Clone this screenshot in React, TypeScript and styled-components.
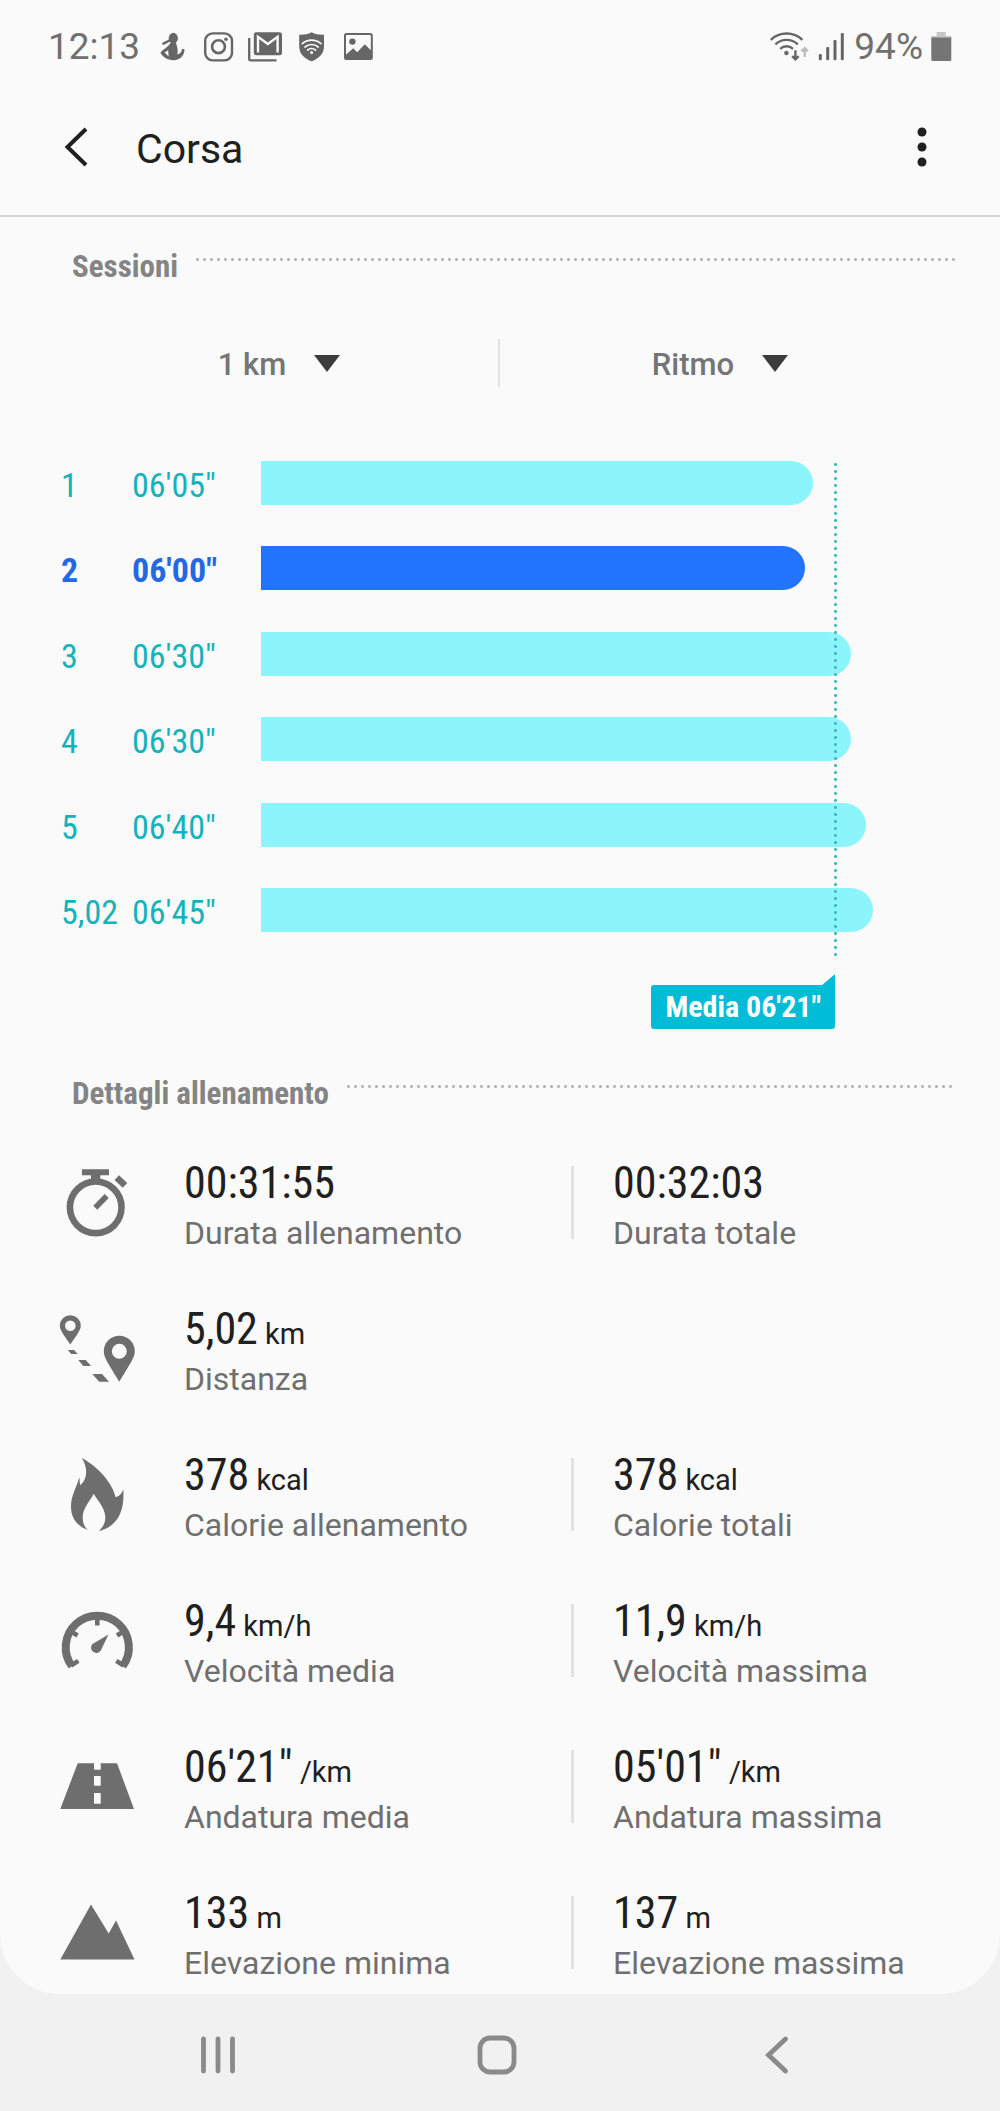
import React from "react";
import styled, { createGlobalStyle } from "styled-components";

const regular = `Roboto, "Noto Sans", sans-serif`;
const condensed = `"Roboto Condensed", Roboto, "Noto Sans", sans-serif`;

const color = {
  page: "#fafafa",
  nav: "#f1f1f1",
  ink: "#202020",
  label: "#6f6f6f",
  icon: "#6e6e6e",
  status: "#666666",
  statusText: "#707070",
  heading: "#848484",
  rule: "#d6d6d6",
  divider: "#e2e2e2",
  dot: "#b4b4b4",
  bar: "#8cf5fb",
  barText: "#14b3bb",
  best: "#2274ff",
  bestText: "#2469e4",
  average: "#00bcd6",
  averageDot: "#39b9c4",
  navIcon: "#8a8a8a",
};

const GlobalStyle = createGlobalStyle`
  *, *::before, *::after { box-sizing: border-box; }
  body { margin: 0; background: ${color.nav}; font-family: ${regular}; color: ${color.ink}; }
  button, select { font: inherit; color: inherit; border: 0; background: none; margin: 0; padding: 0; }
  button { cursor: pointer; }
  h1, h2, dl, dd, dt, ol { margin: 0; padding: 0; }
  svg { display: block; flex: none; }
`;

const Screen = styled.div`
  display: flex;
  flex-direction: column;
  min-height: 100vh;
`;

const Sheet = styled.div`
  background: ${color.page};
  border-radius: 0 0 60px 60px;
  padding-bottom: 3px;
`;

const StatusBar = styled.div`
  display: flex;
  align-items: center;
  justify-content: space-between;
  height: 93px;
  padding: 0 48px;
  color: ${color.statusText};
  font-size: 37px;
  line-height: 44px;
`;

const StatusGroup = styled.div<{ $gap: number }>`
  display: flex;
  align-items: center;
  gap: ${(p) => p.$gap}px;
`;

const Clock = styled.time`
  width: 97px;
`;

const AppBar = styled.header`
  display: flex;
  align-items: center;
  padding: 22px 46px 36px 44px;
  border-bottom: 2px solid ${color.rule};
`;

const IconButton = styled.button`
  display: grid;
  place-items: center;
  width: 64px;
  height: 64px;
`;

const Title = styled.h1`
  flex: 1;
  margin-left: 28px;
  padding-top: 4px;
  font-size: 41px;
  font-weight: 400;
  line-height: 60px;
`;

const SectionHeader = styled.div`
  display: flex;
  align-items: flex-start;
  gap: 16px;
  padding: 0 44px 0 72px;
`;

const SectionTitle = styled.h2`
  font-family: ${condensed};
  font-size: 31px;
  font-weight: 700;
  line-height: 40px;
  color: ${color.heading};
`;

const DottedRule = styled.div`
  flex: 1;
  height: 3px;
  margin-top: 11px;
  background: radial-gradient(circle at center, ${color.dot} 1px, transparent 2px) 0 0 / 7px 3px repeat-x;
`;

const Sessions = styled.section`
  padding: 30px 0 45px;
`;

const Filters = styled.div`
  display: grid;
  grid-template-columns: 1fr 1fr;
  margin: 52px 60px 74px;
`;

const Filter = styled.label`
  display: flex;
  align-items: center;
  justify-content: center;
  gap: 28px;
  height: 48px;
  color: #757575;

  &:first-child {
    border-right: 2px solid ${color.divider};
  }
`;

const FilterSelect = styled.select`
  appearance: none;
  field-sizing: content;
  padding-top: 4px;
  font-size: 31px;
  font-weight: 500;
  line-height: 40px;
`;

const Chart = styled.div`
  position: relative;
  margin: 0 60px 0 61px;
`;

const Laps = styled.ol`
  display: flex;
  flex-direction: column;
  justify-content: space-between;
  height: 471px;
  list-style: none;
`;

const Lap = styled.li<{ $best: boolean }>`
  display: grid;
  grid-template-columns: 71px 129px 1fr;
  height: 44px;
  font-family: ${condensed};
  font-size: 34px;
  font-weight: ${(p) => (p.$best ? 700 : 400)};
  line-height: 48px;
  color: ${(p) => (p.$best ? color.bestText : color.barText)};
  white-space: nowrap;
`;

const LapBar = styled.div<{ $best: boolean }>`
  height: 44px;
  border-radius: 0 22px 22px 0;
  background: ${(p) => (p.$best ? color.best : color.bar)};
`;

const Plot = styled.div`
  position: absolute;
  inset: 0 0 70px 200px;
`;

const AverageLine = styled.div`
  height: 100%;
  background: radial-gradient(circle at center, ${color.averageDot} 1px, transparent 2px) right top / 3px 7px repeat-y;
`;

const AverageTrack = styled.div`
  margin: 53px 0 0 200px;
`;

const AverageSlot = styled.div`
  display: flex;
  justify-content: flex-end;
  padding-right: 2px;
`;

const AverageTag = styled.div`
  position: relative;
  padding: 0 14px;
  border-radius: 3px;
  background: ${color.average};
  color: #ffffff;
  font-family: ${condensed};
  font-size: 30px;
  font-weight: 700;
  line-height: 44px;
  white-space: nowrap;

  &::before {
    content: "";
    position: absolute;
    right: 0;
    bottom: 100%;
    margin-bottom: -4px;
    width: 13px;
    height: 15px;
    background: ${color.average};
    clip-path: polygon(100% 0, 100% 100%, 0 100%, 0 73%);
  }
`;

const Details = styled.section`
  display: flex;
  flex-direction: column;
`;

const DetailList = styled.div`
  display: flex;
  flex-direction: column;
  gap: 46px;
  padding: 47px 42px 0 58px;
`;

const DetailRow = styled.div`
  display: grid;
  grid-template-columns: 126px 1fr 1fr;
  height: 100px;
`;

const Metric = styled.dl<{ $divided: boolean }>`
  display: flex;
  flex-direction: column-reverse;
  justify-content: flex-end;
  padding-left: ${(p) => (p.$divided ? 42 : 0)}px;
  background: ${(p) =>
    p.$divided ? `linear-gradient(${color.divider}, ${color.divider}) 0 5px / 3px 73px no-repeat` : "none"};
  white-space: nowrap;
`;

const MetricValue = styled.dd`
  font-family: ${condensed};
  font-size: 44px;
  line-height: 44px;
`;

const MetricUnit = styled.span`
  font-family: ${regular};
  font-size: 29px;
  line-height: 29px;
`;

const MetricLabel = styled.dt`
  font-size: 32px;
  line-height: 56px;
  color: ${color.label};
`;

const NavBar = styled.nav`
  display: grid;
  grid-template-columns: repeat(3, 1fr);
  justify-items: center;
  align-items: center;
  height: 117px;
  padding: 4px 83px 0 78px;
`;

/* ---------- icons ---------- */

const StatusIcon = ({ children, width = 36 }: { children: React.ReactNode; width?: number }) => (
  <svg width={width} height="30" viewBox={`0 0 ${width} 30`} fill={color.status} aria-hidden="true">
    {children}
  </svg>
);

const FitnessIcon = () => (
  <StatusIcon>
    <ellipse cx="18.3" cy="6.2" rx="4.6" ry="5.4" />
    <path d="M15 8.2 8.4 11.6" stroke={color.status} strokeWidth="2.4" strokeLinecap="round" />
    <path
      fillRule="evenodd"
      d="M16 10h4.6l1.2 3.4c.6 3 1.6 6 .4 9.2 3-.8 4.6-2.8 4.8-5.6h2.4c.4 6-3.8 11.2-11 11.2-6 0-10.6-3-13-7.4 1.8-3.2 6-4.2 9.4-8.8ZM9.6 20.4l4 4.2-.4-6.4Z"
    />
  </StatusIcon>
);

const InstagramIcon = () => (
  <StatusIcon>
    <rect x="4.2" y="1.4" width="26.8" height="27" rx="7.5" fill="none" stroke={color.status} strokeWidth="2.4" />
    <circle cx="17.5" cy="14.7" r="6.4" fill="none" stroke={color.status} strokeWidth="2.6" />
    <circle cx="25" cy="7.2" r="1.8" />
  </StatusIcon>
);

const MailIcon = () => (
  <StatusIcon>
    <path d="M2.2 6V27.3a1 1 0 0 0 1 1H29.5" fill="none" stroke={color.status} strokeWidth="2.3" />
    <rect x="6.8" y=".3" width="28.2" height="23" rx="2.5" />
    <path d="M11 20.5V4.8L20.8 12l9.8-7.2v15.7" fill="none" stroke={color.page} strokeWidth="2.4" />
  </StatusIcon>
);

const ShieldIcon = () => (
  <StatusIcon>
    <path d="M18.6.3c3.6 2.2 8 2.5 12.4 2.4V14c0 8-5 12.6-12.4 15.2C11.2 26.6 6.2 22 6.2 14V2.7C10.6 2.8 15 2.5 18.6.3Z" />
    <g fill="none" stroke={color.page} strokeWidth="1.7" strokeLinecap="round">
      <path d="M9.3 11.7a14 14 0 0 1 18.6 0" />
      <path d="M12 15a10 10 0 0 1 13.2 0" />
      <path d="M14.7 18a6 6 0 0 1 7.8 0" />
    </g>
    <circle cx="18.6" cy="20.6" r="1.5" fill={color.page} />
  </StatusIcon>
);

const PictureIcon = () => (
  <StatusIcon>
    <rect x="6" y="1.9" width="26.8" height="25" rx="1.5" fill="none" stroke={color.status} strokeWidth="2" />
    <circle cx="13.4" cy="9.6" r="3.2" />
    <path d="M6 23.5l8.2-7.3 4 4 7.6-8 7 7V27.5H6Z" />
  </StatusIcon>
);

const WifiIcon = () => (
  <StatusIcon width={40}>
    <g fill="none" stroke={color.status} strokeWidth="2.4">
      <path d="M.8 7.800a23 23 0 0 1 31.6 0" />
      <path d="M5.4 12.3a16.5 16.5 0 0 1 22.4 0" />
      <path d="M10.2 16.8a9.5 9.5 0 0 1 12.8 0" />
      <path d="M25.4 18.2v9M22.2 24.2l3.2 3.2 3.2-3.2" />
      <path d="M34.7 25v-8.5M31.5 19.4l3.2-3.2 3.2 3.2" stroke="#bdbdbd" />
    </g>
    <circle cx="16.4" cy="21" r="2.2" />
  </StatusIcon>
);

const SignalIcon = () => (
  <StatusIcon width={28}>
    <rect x=".8" y="22" width="3" height="6.300" rx="1.2" />
    <rect x="8.2" y="15" width="3" height="13.3" rx="1.2" />
    <rect x="15.5" y="8" width="3" height="20.3" rx="1.2" />
    <rect x="22.8" y="1" width="3" height="27.3" rx="1.2" />
  </StatusIcon>
);

const BatteryIcon = () => (
  <StatusIcon width={21}>
    <path d="M5.7 0h9v4h5.6v3H.3V4h5.4Z" fill="#c6c6c6" />
    <path d="M.3 5.500h20V27.5a1.500 1.500 0 0 1-1.500 1.500h-17A1.500 1.500 0 0 1 .3 27.5Z" fill="#757575" />
  </StatusIcon>
);

const BackIcon = () => (
  <svg width="24" height="40" viewBox="0 0 24 40" fill="none" stroke={color.ink} strokeWidth="4" aria-hidden="true">
    <path d="M22 2 3.500 20 22 38" />
  </svg>
);

const MoreIcon = () => (
  <svg width="10" height="40" viewBox="0 0 10 40" fill={color.ink} aria-hidden="true">
    <circle cx="5" cy="5" r="4.5" />
    <circle cx="5" cy="20" r="4.5" />
    <circle cx="5" cy="35" r="4.5" />
  </svg>
);

const ArrowDown = () => (
  <svg width="26" height="17" viewBox="0 0 26 17" fill="#3c3c3c" aria-hidden="true">
    <path d="M0 0h26L13 17Z" />
  </svg>
);

const DetailIcon = ({ children }: { children: React.ReactNode }) => (
  <svg width="80" height="80" viewBox="0 0 80 80" fill={color.icon} aria-hidden="true">
    {children}
  </svg>
);

const StopwatchIcon = () => (
  <DetailIcon>
    <circle cx="37.7" cy="46.3" r="25.8" fill="none" stroke={color.icon} strokeWidth="6.6" />
    <path d="M24 8.3h27v6h-8.7V21H33v-6.7h-9Z" />
    <path d="M58.8 16.7 67 24.3" stroke={color.icon} strokeWidth="6.6" />
    <path d="M37.3 46.7 48.7 35" stroke={color.icon} strokeWidth="5.6" />
  </DetailIcon>
);

const DistanceIcon = () => (
  <DetailIcon>
    <path
      fillRule="evenodd"
      d="M12.3 8.2a10.500 10.500 0 0 1 10.500 10.500c0 4-3 8-10.500 18.800C4.800 26.700 1.800 22.700 1.800 18.700A10.500 10.500 0 0 1 12.300 8.200Zm0 5.200a5.300 5.300 0 1 0 0 10.600 5.300 5.300 0 0 0 0-10.600Z"
    />
    <path
      fillRule="evenodd"
      d="M61.3 28.8a15.500 15.500 0 0 1 15.500 15.500c0 6-4 11.500-15.500 30.500-11.500-19-15.500-24.500-15.500-30.500a15.500 15.500 0 0 1 15.500-15.500Zm0 8a7.500 7.500 0 1 0 0 15 7.500 7.500 0 0 0 0-15Z"
    />
    <path d="M9.7 43H16l3.700 4h-6.400ZM20.300 53h7.400l5.300 6h-7.700ZM34.300 67H44l7 7.700h-9.700Z" />
  </DetailIcon>
);

const FlameIcon = () => (
  <DetailIcon>
    <path d="M23.7 5C36 11.5 53 26 57.7 44.3 61 43.5 64 40.5 65.3 36.3 66.5 54 62.5 73 40.7 78 46 73.5 47.5 68.5 47.3 63.7 46.5 54 40.5 49 35.7 40.7 31.5 49 24.5 55 24.7 65.3 25 70.5 26.5 74 30 77 19 73 13 65 13 53.7 13 42.5 18.5 35 21.3 24.3c.6 3 .2 5 .9 7.900C28.5 27.5 31 16 23.7 5Z" />
  </DetailIcon>
);

const SpeedIcon = () => (
  <DetailIcon>
    <g fill="none" stroke={color.icon}>
      <path d="M14 67.2a31.600 31.600 0 1 1 50.600 0" strokeWidth="8" />
      <path d="M39.3 14v12.5M14 33l5.600 3.500M64.600 33 59 36.500M13 66.700l7.300-4.800M65.600 66.700l-7.300-4.800" strokeWidth="4.6" />
    </g>
    <path d="M50.5 35.5 42.8 51.5A5.300 5.300 0 1 1 34.500 45Z" />
  </DetailIcon>
);

const RoadIcon = () => (
  <DetailIcon>
    <path
      fillRule="evenodd"
      d="M19.7 18.2H36V24.7h6.700V18.2H59L76 64H2.3ZM36 31.1v9.700h6.700v-9.700ZM36 47.9v10.800h6.700V47.9Z"
    />
  </DetailIcon>
);

const MountainIcon = () => (
  <DetailIcon>
    <path d="M33 13.5 50.7 42.5 58 29.5 76.5 68.5H2.3Z" />
  </DetailIcon>
);

const NavIcon = ({ children }: { children: React.ReactNode }) => (
  <svg
    width="40"
    height="40"
    viewBox="0 0 40 40"
    fill="none"
    stroke={color.navIcon}
    strokeWidth="4.8"
    strokeLinecap="round"
    aria-hidden="true"
  >
    {children}
  </svg>
);

/* ---------- data ---------- */

const PACE_SCALE = 449;
const AVERAGE_SECONDS = 381;

const laps = [
  { km: "1", pace: `06'05"`, seconds: 365 },
  { km: "2", pace: `06'00"`, seconds: 360, best: true },
  { km: "3", pace: `06'30"`, seconds: 390 },
  { km: "4", pace: `06'30"`, seconds: 390 },
  { km: "5", pace: `06'40"`, seconds: 400 },
  { km: "5,02", pace: `06'45"`, seconds: 405 },
];

type MetricData = { value: string; unit?: string; label: string };

const details: { icon: React.ComponentType; metrics: MetricData[] }[] = [
  {
    icon: StopwatchIcon,
    metrics: [
      { value: "00:31:55", label: "Durata allenamento" },
      { value: "00:32:03", label: "Durata totale" },
    ],
  },
  { icon: DistanceIcon, metrics: [{ value: "5,02", unit: "km", label: "Distanza" }] },
  {
    icon: FlameIcon,
    metrics: [
      { value: "378", unit: "kcal", label: "Calorie allenamento" },
      { value: "378", unit: "kcal", label: "Calorie totali" },
    ],
  },
  {
    icon: SpeedIcon,
    metrics: [
      { value: "9,4", unit: "km/h", label: "Velocità media" },
      { value: "11,9", unit: "km/h", label: "Velocità massima" },
    ],
  },
  {
    icon: RoadIcon,
    metrics: [
      { value: `06'21"`, unit: "/km", label: "Andatura media" },
      { value: `05'01"`, unit: "/km", label: "Andatura massima" },
    ],
  },
  {
    icon: MountainIcon,
    metrics: [
      { value: "133", unit: "m", label: "Elevazione minima" },
      { value: "137", unit: "m", label: "Elevazione massima" },
    ],
  },
];

const share = (seconds: number) => ({ width: `${(seconds / PACE_SCALE) * 100}%` });

export default function App() {
  return (
    <Screen>
      <GlobalStyle />
      <Sheet>
        <StatusBar>
          <StatusGroup $gap={10}>
            <Clock>12:13</Clock>
            <FitnessIcon />
            <InstagramIcon />
            <MailIcon />
            <ShieldIcon />
            <PictureIcon />
          </StatusGroup>
          <StatusGroup $gap={8}>
            <WifiIcon />
            <SignalIcon />
            <span>94%</span>
            <BatteryIcon />
          </StatusGroup>
        </StatusBar>

        <AppBar>
          <IconButton aria-label="Indietro">
            <BackIcon />
          </IconButton>
          <Title>Corsa</Title>
          <IconButton aria-label="Altro">
            <MoreIcon />
          </IconButton>
        </AppBar>

        <Sessions>
          <SectionHeader>
            <SectionTitle>Sessioni</SectionTitle>
            <DottedRule />
          </SectionHeader>

          <Filters>
            <Filter>
              <FilterSelect aria-label="Distanza">
                <option>1 km</option>
              </FilterSelect>
              <ArrowDown />
            </Filter>
            <Filter>
              <FilterSelect aria-label="Valore">
                <option>Ritmo</option>
              </FilterSelect>
              <ArrowDown />
            </Filter>
          </Filters>

          <Chart>
            <Laps>
              {laps.map((lap) => (
                <Lap key={lap.km} $best={!!lap.best}>
                  <span>{lap.km}</span>
                  <span>{lap.pace}</span>
                  <div>
                    <LapBar $best={!!lap.best} style={share(lap.seconds)} />
                  </div>
                </Lap>
              ))}
            </Laps>
            <Plot>
              <AverageLine style={share(AVERAGE_SECONDS)} />
            </Plot>
            <AverageTrack>
              <AverageSlot style={share(AVERAGE_SECONDS)}>
                <AverageTag>Media 06'21"</AverageTag>
              </AverageSlot>
            </AverageTrack>
          </Chart>
        </Sessions>

        <Details>
          <SectionHeader>
            <SectionTitle>Dettagli allenamento</SectionTitle>
            <DottedRule />
          </SectionHeader>
          <DetailList>
            {details.map(({ icon: Icon, metrics }) => (
              <DetailRow key={metrics[0].label}>
                <Icon />
                {metrics.map((metric, index) => (
                  <Metric key={metric.label} $divided={index > 0}>
                    <MetricLabel>{metric.label}</MetricLabel>
                    <MetricValue>
                      {metric.value}
                      {metric.unit && <MetricUnit> {metric.unit}</MetricUnit>}
                    </MetricValue>
                  </Metric>
                ))}
              </DetailRow>
            ))}
          </DetailList>
        </Details>
      </Sheet>

      <NavBar>
        <IconButton aria-label="Recenti">
          <NavIcon>
            <path d="M5.5 4v32M20 4v32M34.5 4v32" />
          </NavIcon>
        </IconButton>
        <IconButton aria-label="Home">
          <NavIcon>
            <rect x="3" y="3" width="34" height="34" rx="10" />
          </NavIcon>
        </IconButton>
        <IconButton aria-label="Indietro">
          <NavIcon>
            <path d="M28.5 4 11.5 20l17 16" />
          </NavIcon>
        </IconButton>
      </NavBar>
    </Screen>
  );
}
